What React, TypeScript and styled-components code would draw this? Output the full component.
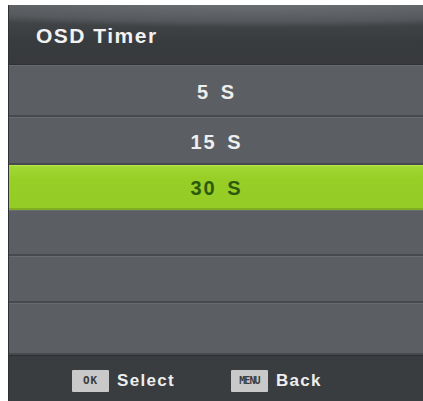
import styled, { createGlobalStyle } from "styled-components";

const Global = createGlobalStyle`
  html, body {
    margin: 0;
    padding: 0;
    background: #ffffff;
  }
  body {
    font-family: "Liberation Sans", Arial, sans-serif;
  }
`;

const Screen = styled.div`
  margin: 5px 0 0 8px;
  width: 415px;
  height: 396px;
  display: flex;
  flex-direction: column;
  background: #5b5e62;
  overflow: hidden;
  border-left: 1px solid #2f3134;
`;

const Header = styled.div`
  height: 60px;
  flex: none;
  display: flex;
  align-items: center;
  padding: 3px 0 0 27px;
  box-sizing: border-box;
  background:
    radial-gradient(ellipse 140% 60% at 60% -5%, rgba(120, 123, 127, 0.75) 0%, rgba(120, 123, 127, 0.35) 55%, rgba(0, 0, 0, 0) 72%),
    linear-gradient(#4a4d50, #393c3f 60%, #37393c);
  color: #f2f2f2;
  font-size: 21px;
  font-weight: 700;
  letter-spacing: 1.5px;
  border-bottom: 1px solid #2f3134;
`;

const List = styled.div`
  flex: 1;
  display: flex;
  flex-direction: column;
`;

const Row = styled.div<{ $h: number; $active?: boolean }>`
  height: ${(p) => p.$h}px;
  flex: none;
  box-sizing: border-box;
  display: flex;
  align-items: center;
  justify-content: center;
  padding-top: 3px;
  font-size: 20px;
  font-weight: 700;
  letter-spacing: 2px;
  word-spacing: 3px;
  color: ${(p) => (p.$active ? "#2d5a0e" : "#eeeeee")};
  background: ${(p) =>
    p.$active ? "linear-gradient(#a4d834, #97cf27 30%, #94cc25)" : "#5b5e62"};
  border-top: 1px solid ${(p) => (p.$active ? "#b6e24c" : "#686b6f")};
  border-bottom: 2px solid ${(p) => (p.$active ? "#7fae22" : "#46494d")};
`;

const Footer = styled.div`
  flex: 1;
  display: flex;
  align-items: center;
  padding: 4px 0 0 63px;
  gap: 56px;
  background: #3a3d40;
  border-top: 1px solid #2c2e31;
`;

const Hint = styled.div`
  display: flex;
  align-items: center;
  gap: 8px;
  color: #eeeeee;
  font-size: 17px;
  font-weight: 700;
  letter-spacing: 1.3px;
`;

const Key = styled.span<{ $tight?: boolean }>`
  width: 37px;
  height: 22px;
  display: inline-flex;
  align-items: center;
  justify-content: center;
  background: #c9c9c9;
  color: #3a3a3a;
  font-family: "DejaVu Sans Mono", "Liberation Mono", monospace;
  font-size: ${(p) => (p.$tight ? "10px" : "11px")};
  font-weight: 700;
  letter-spacing: ${(p) => (p.$tight ? "-1px" : "1px")};
  border-radius: 1px;
`;

const rows = [
  { label: "5 S", h: 52 },
  { label: "15 S", h: 48 },
  { label: "30 S", h: 45, active: true },
  { label: "", h: 46 },
  { label: "", h: 47 },
  { label: "", h: 52 },
];

export default function App() {
  return (
    <>
      <Global />
      <Screen>
        <Header>OSD Timer</Header>
        <List>
          {rows.map((r, i) => (
            <Row key={i} $h={r.h} $active={r.active}>
              {r.label}
            </Row>
          ))}
        </List>
        <Footer>
          <Hint>
            <Key>OK</Key>
            Select
          </Hint>
          <Hint>
            <Key $tight>MENU</Key>
            Back
          </Hint>
        </Footer>
      </Screen>
    </>
  );
}
